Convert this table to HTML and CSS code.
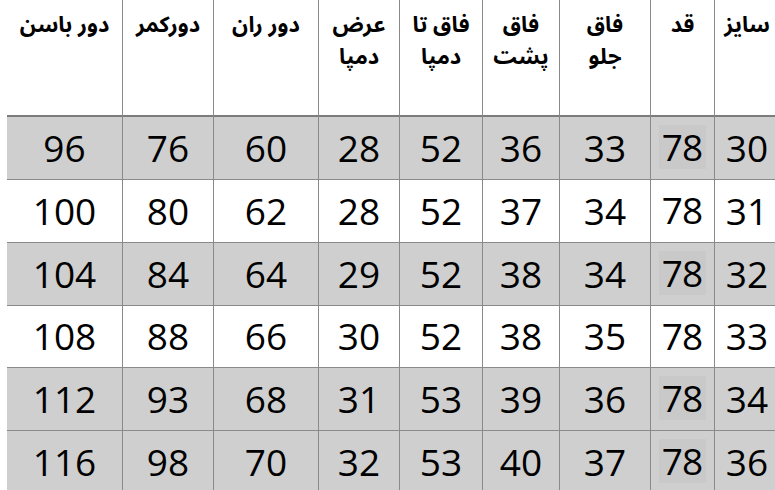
FILE: index.html
```html
<!DOCTYPE html>
<html lang="fa">
<head>
<meta charset="utf-8">
<title>جدول سایز</title>
<link rel="stylesheet" href="styles.css">
</head>
<body>
<div class="sheet">
  <div class="grid">
    <div class="cell head">سایز</div>
    <div class="cell head">قد</div>
    <div class="cell head">فاق<br>جلو</div>
    <div class="cell head">فاق<br>پشت</div>
    <div class="cell head">فاق تا<br>دمپا</div>
    <div class="cell head">عرض<br>دمپا</div>
    <div class="cell head">دور ران</div>
    <div class="cell head">دورکمر</div>
    <div class="cell head last">دور باسن</div>

    <div class="cell num g">30</div><div class="cell num g"><span class="pat">78</span></div><div class="cell num g">33</div><div class="cell num g">36</div><div class="cell num g">52</div><div class="cell num g">28</div><div class="cell num g">60</div><div class="cell num g">76</div><div class="cell num g last">96</div>

    <div class="cell num">31</div><div class="cell num"><span class="qd">78</span></div><div class="cell num">34</div><div class="cell num">37</div><div class="cell num">52</div><div class="cell num">28</div><div class="cell num">62</div><div class="cell num">80</div><div class="cell num last">100</div>

    <div class="cell num g">32</div><div class="cell num g"><span class="pat">78</span></div><div class="cell num g">34</div><div class="cell num g">38</div><div class="cell num g">52</div><div class="cell num g">29</div><div class="cell num g">64</div><div class="cell num g">84</div><div class="cell num g last">104</div>

    <div class="cell num">33</div><div class="cell num"><span class="qd">78</span></div><div class="cell num">35</div><div class="cell num">38</div><div class="cell num">52</div><div class="cell num">30</div><div class="cell num">66</div><div class="cell num">88</div><div class="cell num last">108</div>

    <div class="cell num g">34</div><div class="cell num g"><span class="pat">78</span></div><div class="cell num g">36</div><div class="cell num g">39</div><div class="cell num g">53</div><div class="cell num g">31</div><div class="cell num g">68</div><div class="cell num g">93</div><div class="cell num g last">112</div>

    <div class="cell num g">36</div><div class="cell num g"><span class="pat">78</span></div><div class="cell num g">37</div><div class="cell num g">40</div><div class="cell num g">53</div><div class="cell num g">32</div><div class="cell num g">70</div><div class="cell num g">98</div><div class="cell num g last">116</div>
  </div>
</div>
</body>
</html>
```

FILE: styles.css
```css
html, body {
  margin: 0;
  padding: 0;
  background: #ffffff;
  overflow: hidden;
}

.sheet {
  width: 775px;
  height: 490px;
  overflow: hidden;
  padding-left: 7px;
  box-sizing: border-box;
}

.grid {
  direction: rtl;
  display: grid;
  width: 772px;
  grid-template-columns: 65px 64px 91px 77px 83px 81px 105px 91px 115px;
  grid-template-rows: 117px 63px 63px 63px 62px 63px 63px;
}

.cell {
  box-sizing: border-box;
  border-left: 1px solid #8a8a8a;
  border-bottom: 1px solid #8a8a8a;
  color: #000;
}

.cell.last {
  border-left: none;
}

.head {
  border-bottom: 2px solid #7c7c7c;
  font-family: "Noto Sans Arabic", "DejaVu Sans", sans-serif;
  font-weight: bold;
  font-size: 22px;
  line-height: 32px;
  text-align: center;
  padding-top: 9px;
}

.num {
  font-family: "Open Sans", "Noto Sans", sans-serif;
  font-size: 37px;
  display: flex;
  align-items: center;
  justify-content: center;
  direction: ltr;
  line-height: 1;
  padding-bottom: 2px;
}

.g {
  background: #cfcfcf;
}

.qd,
.pat {
  letter-spacing: -1px;
  padding: 3px 4px 4px 3px;
}

.pat {
  background: #c9c9c9;
}
```
